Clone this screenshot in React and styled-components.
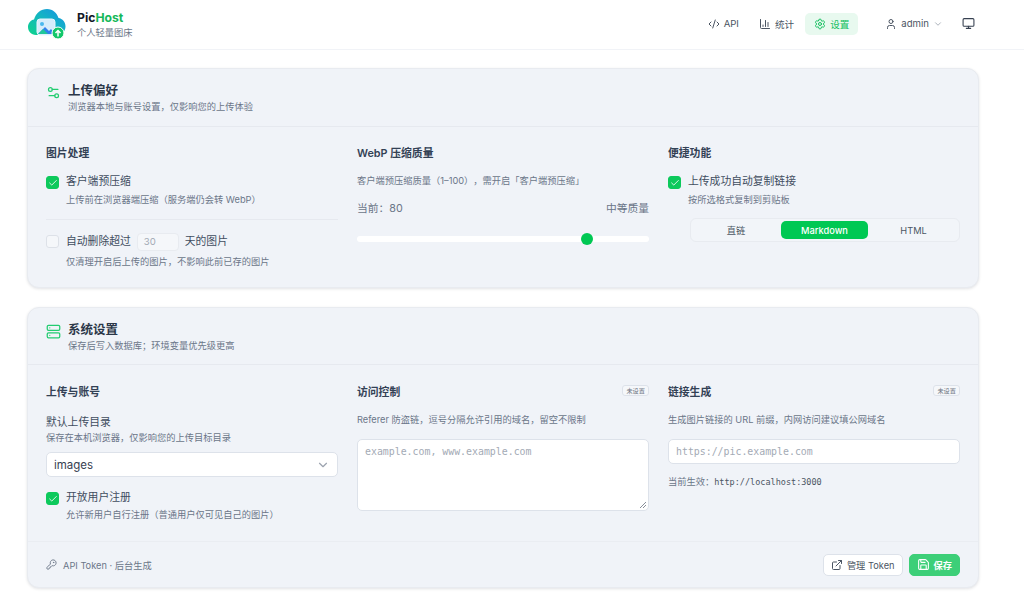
import React from 'react';
import styled, { createGlobalStyle } from 'styled-components';
import { Code2, ChartColumn, Settings, User, ChevronDown, Monitor, Settings2, Server, Check, KeyRound, ExternalLink, Save } from 'lucide-react';

const FONT = `Inter, "Noto Sans CJK SC", sans-serif`;
const MONO = `"DejaVu Sans Mono", "Liberation Mono", "Noto Sans CJK SC", monospace`;
const GREEN = '#00c853';

const Global = createGlobalStyle`
  html, body { margin: 0; padding: 0; background: #fff; }
  body { font-family: ${FONT}; color: #1f2937; overflow: hidden; text-spacing-trim: space-all; }
  * { box-sizing: border-box; }
`;

const Page = styled.div`
  width: 1024px;
  height: 614px;
  overflow: hidden;
`;

const Header = styled.header`
  height: 50px;
  display: flex;
  align-items: center;
  padding: 0 49px 2px 28px;
  border-bottom: 1px solid #f1f3f7;
`;

const Brand = styled.div`
  display: flex;
  align-items: center;
  gap: 11px;
  flex: 1;
`;

const BrandText = styled.div`
  display: flex;
  flex-direction: column;
  gap: 2px;
  padding-top: 2px;
`;

const BrandName = styled.div`
  font-size: 12.2px;
  font-weight: 700;
  line-height: 15px;
  color: #111827;
  span { color: #16b85a; }
`;

const BrandSub = styled.div`
  font-size: 9.25px;
  line-height: 12px;
  color: #6b7688;
`;

const Nav = styled.nav`
  display: flex;
  align-items: center;
  gap: 2px;
`;

const NavItem = styled.div`
  display: flex;
  align-items: center;
  gap: 4px;
  height: 22px;
  padding: 0 9px;
  margin-right: ${(p) => p.$mr || 0}px;
  border-radius: 5px;
  font-size: 9.6px;
  color: ${(p) => (p.$active ? '#16c060' : '#4b5563')};
  background: ${(p) => (p.$active ? '#e8f9ef' : 'transparent')};
`;

const Main = styled.main`
  display: flex;
  flex-direction: column;
  gap: 19px;
  padding: 18px 45px 0 27px;
`;

const Card = styled.section`
  background: #f0f3f8;
  border: 1px solid #e8ebf0;
  border-radius: 12px;
  box-shadow: 0 1px 3px rgba(15, 23, 42, 0.12);
  height: ${(p) => p.$h}px;
  display: flex;
  flex-direction: column;
`;

const CardHead = styled.div`
  height: ${(p) => p.$h}px;
  flex: none;
  display: flex;
  gap: 7px;
  padding: 13px 18px 0;
  border-bottom: 1px solid #e6e9ef;
`;

const HeadIcon = styled.div`
  width: 15px;
  padding-top: 2px;
  color: #22cc70;
`;

const CardTitle = styled.div`
  font-size: 12.5px;
  font-weight: 600;
  line-height: 17px;
  color: #2b3748;
`;

const CardSub = styled.div`
  font-size: 9.25px;
  line-height: 13px;
  margin-top: 1px;
  color: #6b7688;
`;

const Columns = styled.div`
  flex: 1;
  display: grid;
  grid-template-columns: repeat(3, 292px);
  column-gap: 19px;
  padding: ${(p) => p.$pt}px 18px 0;
`;

const ColHead = styled.div`
  display: flex;
  align-items: center;
  justify-content: space-between;
  height: 15px;
  margin-bottom: ${(p) => p.$mb ?? 15}px;
`;

const ColTitle = styled.h3`
  margin: 0;
  font-size: 10.8px;
  font-weight: 600;
  color: #334155;
`;

const Badge = styled.span`
  height: 11px;
  padding: 0 3px;
  display: flex;
  align-items: center;
  border: 1px solid #dde2ea;
  border-radius: 3px;
  font-size: 6.2px;
  color: #6b7280;
  background: #f5f7fa;
`;

const CheckRow = styled.div`
  display: flex;
  gap: 7px;
`;

const Box = styled.span`
  flex: none;
  width: 13px;
  height: 13px;
  margin-top: 2px;
  border-radius: 3px;
  display: flex;
  align-items: center;
  justify-content: center;
  color: #fff;
  background: ${(p) => (p.$on ? '#0dc95c' : '#f5f7fa')};
  border: 1px solid ${(p) => (p.$on ? '#0dc95c' : '#dde1e8')};
`;

const Label = styled.div`
  display: flex;
  align-items: center;
  gap: 6px;
  font-size: 10.8px;
  line-height: 16px;
  color: #414d5f;
`;

const Hint = styled.div`
  font-size: 9.25px;
  line-height: 13px;
  margin-top: ${(p) => p.$mt ?? 3}px;
  color: #6b7688;
`;

const Divider = styled.div`
  height: 1px;
  margin: 13px 0 13px;
  background: #e6e9ef;
`;

const DaysInput = styled.span`
  width: 42px;
  height: 18px;
  padding-left: 6px;
  display: flex;
  align-items: center;
  font-size: 9.6px;
  color: #a3aab5;
  background: #f5f7fa;
  border: 1px solid #e8ebf0;
  border-radius: 4px;
`;

const QualityRow = styled.div`
  display: flex;
  justify-content: space-between;
  margin-top: 15px;
  font-size: 10.75px;
  line-height: 14px;
  color: #6b7688;
`;

const Track = styled.div`
  position: relative;
  height: 6px;
  margin-top: 20px;
  border-radius: 3px;
  background: #fff;
`;

const Thumb = styled.span`
  position: absolute;
  top: -3px;
  width: 12px;
  height: 12px;
  border-radius: 50%;
  background: ${GREEN};
`;

const Segments = styled.div`
  display: grid;
  grid-template-columns: 90px 87px 1fr;
  margin: 12px 0 0 22px;
  height: 24px;
  padding: 2px 0;
  border: 1px solid #e8ebf0;
  border-radius: 6px;
  background: #f2f5f9;
`;

const Segment = styled.div`
  display: flex;
  align-items: center;
  justify-content: center;
  border-radius: 5px;
  font-size: 9.25px;
  font-weight: ${(p) => (p.$active ? 500 : 400)};
  color: ${(p) => (p.$active ? '#fff' : '#4b5563')};
  background: ${(p) => (p.$active ? GREEN : 'transparent')};
`;

const FieldLabel = styled.div`
  font-size: 10.8px;
  line-height: 15px;
  color: #414d5f;
`;

const Select = styled.div`
  height: 25px;
  margin: 8px 0 13px;
  padding: 0 7px;
  display: flex;
  align-items: center;
  justify-content: space-between;
  font-size: 11.5px;
  color: #374151;
  background: #fff;
  border: 1px solid #dde2ea;
  border-radius: 5px;
`;

const TextArea = styled.div`
  position: relative;
  height: 72px;
  margin-top: 13px;
  padding: 5px 7px;
  font-family: ${MONO};
  font-size: 9.9px;
  line-height: 14px;
  color: #a3aab5;
  background: #fff;
  border: 1px solid #dde2ea;
  border-radius: 5px;
`;

const Grip = styled.svg`
  position: absolute;
  right: 1px;
  bottom: 1px;
`;

const TextInput = styled.div`
  height: 25px;
  margin-top: 13px;
  padding: 0 7px;
  display: flex;
  align-items: center;
  font-family: ${MONO};
  font-size: 9.9px;
  color: #a3aab5;
  background: #fff;
  border: 1px solid #dde2ea;
  border-radius: 5px;
`;

const Effective = styled.div`
  margin-top: 11px;
  font-size: 9.25px;
  line-height: 13px;
  color: #6b7688;
  code {
    font-family: ${MONO};
    font-size: 8.5px;
    color: #4b5563;
  }
`;

const CardFoot = styled.div`
  height: 46px;
  flex: none;
  display: flex;
  align-items: center;
  justify-content: space-between;
  padding: 0 18px;
  border-top: 1px solid #eaedf2;
`;

const FootNote = styled.div`
  display: flex;
  align-items: center;
  gap: 6px;
  font-size: 9.25px;
  color: #6b7688;
`;

const FootActions = styled.div`
  display: flex;
  align-items: center;
  gap: 6px;
`;

const Button = styled.div`
  height: 22px;
  padding: 0 7px;
  display: flex;
  align-items: center;
  gap: 4px;
  border-radius: 5px;
  font-size: 9.25px;
  font-weight: ${(p) => (p.$primary ? 600 : 400)};
  color: ${(p) => (p.$primary ? '#fff' : '#4b5563')};
  background: ${(p) => (p.$primary ? '#3dcf78' : '#fff')};
  border: 1px solid ${(p) => (p.$primary ? '#3dcf78' : '#dde2ea')};
`;

const Logo = () => (
  <svg width="38" height="32" viewBox="0 0 38 32">
    <defs>
      <linearGradient id="cloud" x1="0" y1="1" x2="1" y2="0">
        <stop offset="0" stopColor="#0ed48a" />
        <stop offset="0.55" stopColor="#14b4c4" />
        <stop offset="1" stopColor="#1790e6" />
      </linearGradient>
    </defs>
    <path d="M8 27C3 27 0 23 0 19c0-4 3-7 6-7.500C8 5 13 1 19 1c6 0 10 4 11.500 9 4 .5 7 4 7 8.500 0 4-3 8.500-8 8.500z" fill="url(#cloud)" />
    <rect x="9" y="11" width="18" height="16" rx="3" fill="#d5ecfb" stroke="#e6f5fd" />
    <circle cx="14" cy="16" r="2" fill="#49b8ee" />
    <path d="M10 26l7-7 4 4 2-2 4 5z" fill="#2f80ed" />
    <path d="M10 26l5-5 5 5z" fill="#1fc79a" />
    <circle cx="30" cy="25" r="6" fill="#12c76a" stroke="#fff" strokeWidth="1" />
    <path d="M30 28.500v-6M27.500 25l2.500-2.500 2.500 2.500" fill="none" stroke="#fff" strokeWidth="1.500" />
  </svg>
);

const CheckBox = ({ on }) => (
  <Box $on={on}>{on && <Check size={10} strokeWidth={2} />}</Box>
);

const Panel = ({ h, icon, title, sub }) => (
  <CardHead $h={h}>
    <HeadIcon>{icon}</HeadIcon>
    <div>
      <CardTitle>{title}</CardTitle>
      <CardSub>{sub}</CardSub>
    </div>
  </CardHead>
);

export default function App() {
  return (
    <Page>
      <Global />
      <Header>
        <Brand>
          <Logo />
          <BrandText>
            <BrandName>Pic<span>Host</span></BrandName>
            <BrandSub>个人轻量图床</BrandSub>
          </BrandText>
        </Brand>
        <Nav>
          <NavItem><Code2 size={12} />API</NavItem>
          <NavItem><ChartColumn size={12} />统计</NavItem>
          <NavItem $active $mr={16}><Settings size={12} />设置</NavItem>
          <NavItem $mr={8}><User size={12} />admin<ChevronDown size={10} color="#9ca3af" /></NavItem>
          <Monitor size={13} color="#374151" />
        </Nav>
      </Header>
      <Main>
        <Card $h={220}>
          <Panel h={58} icon={<Settings2 size={15} />} title="上传偏好" sub="浏览器本地与账号设置，仅影响您的上传体验" />
          <Columns $pt={17}>
            <div>
              <ColHead><ColTitle>图片处理</ColTitle></ColHead>
              <CheckRow>
                <CheckBox on />
                <div>
                  <Label>客户端预压缩</Label>
                  <Hint>上传前在浏览器端压缩（服务端仍会转 WebP）</Hint>
                </div>
              </CheckRow>
              <Divider />
              <CheckRow>
                <CheckBox />
                <div>
                  <Label>自动删除超过 <DaysInput>30</DaysInput> 天的图片</Label>
                  <Hint $mt={4}>仅清理开启后上传的图片，不影响此前已存的图片</Hint>
                </div>
              </CheckRow>
            </div>
            <div>
              <ColHead><ColTitle>WebP 压缩质量</ColTitle></ColHead>
              <Hint $mt={0}>客户端预压缩质量（1–100），需开启「客户端预压缩」</Hint>
              <QualityRow><span>当前：80</span><span>中等质量</span></QualityRow>
              <Track><Thumb style={{ left: '76.800%' }} /></Track>
            </div>
            <div>
              <ColHead><ColTitle>便捷功能</ColTitle></ColHead>
              <CheckRow>
                <CheckBox on />
                <div>
                  <Label>上传成功自动复制链接</Label>
                  <Hint>按所选格式复制到剪贴板</Hint>
                </div>
              </CheckRow>
              <Segments>
                <Segment>直链</Segment>
                <Segment $active>Markdown</Segment>
                <Segment>HTML</Segment>
              </Segments>
            </div>
          </Columns>
        </Card>
        <Card $h={281}>
          <Panel h={57} icon={<Server size={15} />} title="系统设置" sub="保存后写入数据库；环境变量优先级更高" />
          <Columns $pt={18}>
            <div>
              <ColHead $mb={17}><ColTitle>上传与账号</ColTitle></ColHead>
              <FieldLabel>默认上传目录</FieldLabel>
              <Hint $mt={1}>保存在本机浏览器，仅影响您的上传目标目录</Hint>
              <Select>images<ChevronDown size={14} color="#9ca3af" /></Select>
              <CheckRow>
                <CheckBox on />
                <div>
                  <Label>开放用户注册</Label>
                  <Hint $mt={2}>允许新用户自行注册（普通用户仅可见自己的图片）</Hint>
                </div>
              </CheckRow>
            </div>
            <div>
              <ColHead><ColTitle>访问控制</ColTitle><Badge>未设置</Badge></ColHead>
              <Hint $mt={0}>Referer 防盗链，逗号分隔允许引用的域名，留空不限制</Hint>
              <TextArea>
                example.com, www.example.com
                <Grip width="8" height="8" viewBox="0 0 8 8">
                  <path d="M7 1L1 7M7 4L4 7" stroke="#6b7280" strokeWidth="0.800" fill="none" />
                </Grip>
              </TextArea>
            </div>
            <div>
              <ColHead><ColTitle>链接生成</ColTitle><Badge>未设置</Badge></ColHead>
              <Hint $mt={0}>生成图片链接的 URL 前缀，内网访问建议填公网域名</Hint>
              <TextInput>https://pic.example.com</TextInput>
              <Effective>当前生效：<code>http://localhost:3000</code></Effective>
            </div>
          </Columns>
          <CardFoot>
            <FootNote><KeyRound size={11} />API Token · 后台生成</FootNote>
            <FootActions>
              <Button><ExternalLink size={12} />管理 Token</Button>
              <Button $primary><Save size={13} />保存</Button>
            </FootActions>
          </CardFoot>
        </Card>
      </Main>
    </Page>
  );
}
